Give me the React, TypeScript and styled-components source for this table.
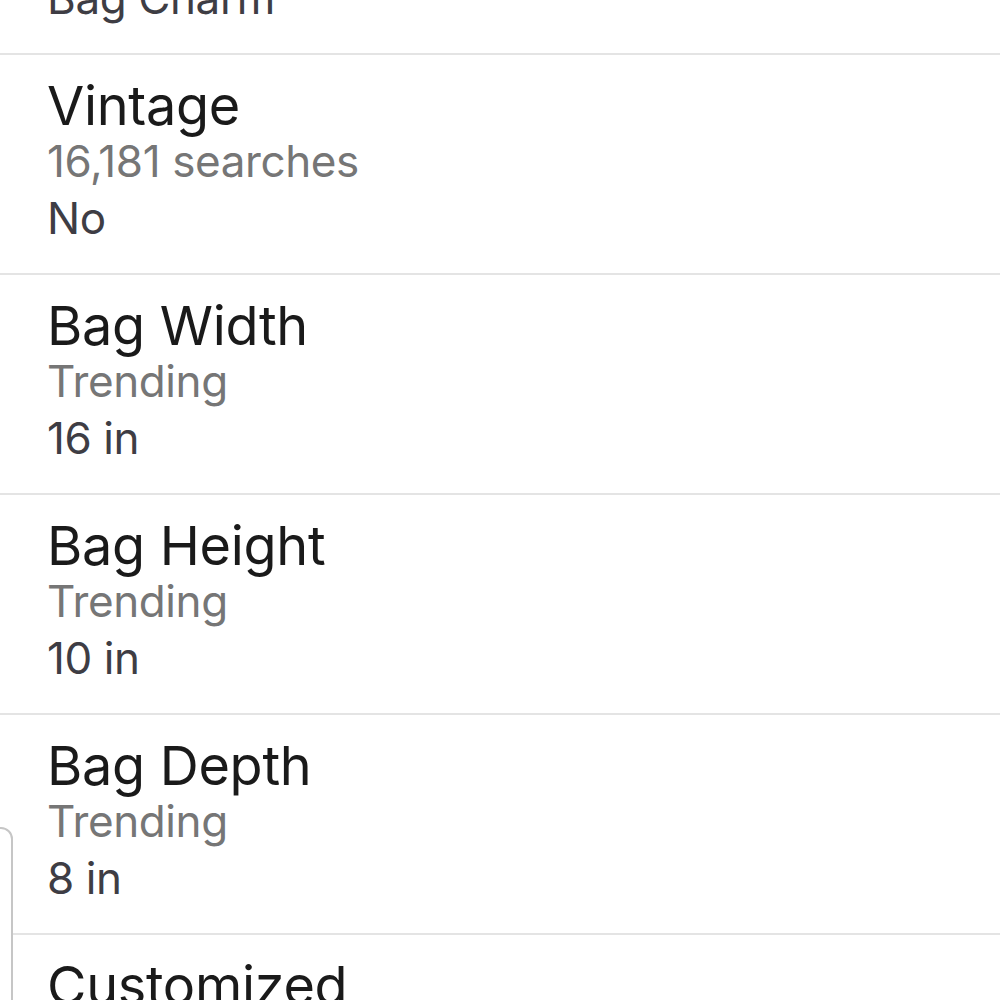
import React from 'react';
import styled, { createGlobalStyle } from 'styled-components';

const GlobalStyle = createGlobalStyle`
  html, body {
    margin: 0;
    padding: 0;
    background: #ffffff;
    overflow: hidden;
  }
  body {
    font-family: Inter, "Noto Sans", sans-serif;
    -webkit-font-smoothing: antialiased;
  }
`;

const Screen = styled.div`
  position: relative;
  width: 1000px;
  height: 1000px;
  overflow: hidden;
  background: #ffffff;
`;

const List = styled.ul`
  list-style: none;
  margin: -165px 0 0 0;
  padding: 0;
`;

const Row = styled.li`
  display: flex;
  flex-direction: column;
  padding: 23px 47px 26px;
  border-bottom: 2px solid #e4e4e4;
`;

const Title = styled.div`
  font-size: 54px;
  line-height: 55px;
  letter-spacing: -0.3px;
  color: #1a1a1a;
  white-space: nowrap;
`;

const Meta = styled.div<{ $muted?: boolean }>`
  font-size: 44px;
  line-height: 57px;
  letter-spacing: -0.4px;
  color: ${props => (props.$muted ? '#767676' : '#3e3d44')};
  white-space: nowrap;
`;

// edge of a floating card peeking in from the left
const SideCard = styled.div`
  position: absolute;
  left: -24px;
  top: 827px;
  width: 33px;
  height: 220px;
  border: 2px solid #c6c6c6;
  border-radius: 12px;
  background: #ffffff;
`;

type Attribute = {
  name: string;
  hint: string;
  value: string;
};

const attributes: Attribute[] = [
  { name: 'Primary Style', hint: 'Trending', value: 'Bag Charm' },
  { name: 'Vintage', hint: '16,181 searches', value: 'No' },
  { name: 'Bag Width', hint: 'Trending', value: '16 in' },
  { name: 'Bag Height', hint: 'Trending', value: '10 in' },
  { name: 'Bag Depth', hint: 'Trending', value: '8 in' },
  { name: 'Customized', hint: 'Trending', value: 'No' },
];

export default function App() {
  return (
    <Screen>
      <GlobalStyle />
      <List>
        {attributes.map(attr => (
          <Row key={attr.name}>
            <Title>{attr.name}</Title>
            <Meta $muted>{attr.hint}</Meta>
            <Meta>{attr.value}</Meta>
          </Row>
        ))}
      </List>
      <SideCard />
    </Screen>
  );
}
